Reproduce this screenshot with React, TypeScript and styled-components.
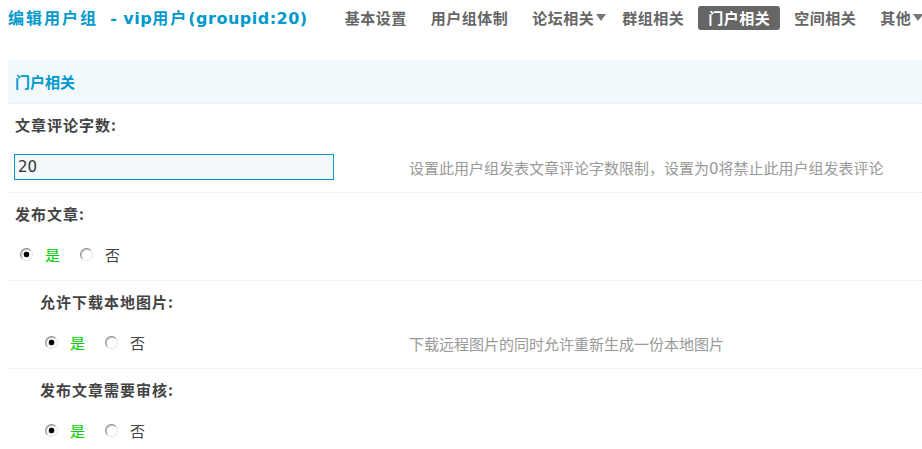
import styled, { createGlobalStyle } from "styled-components";

const GlobalStyle = createGlobalStyle`
  html, body {
    margin: 0;
    padding: 0;
    background: #fff;
  }
  body {
    font-family: "DejaVu Sans", "Noto Sans CJK SC", sans-serif;
    font-size: 15px;
    color: #333;
  }
`;

const navItems = [
  { name: "基本设置" },
  { name: "用户组体制" },
  { name: "论坛相关", drop: true },
  { name: "群组相关" },
  { name: "门户相关", active: true },
  { name: "空间相关" },
  { name: "其他", drop: true },
];

export default function App() {
  return (
    <Page>
      <GlobalStyle />
      <TopBar>
        <Title>
          <Cjk>编辑用户组</Cjk>
          {"  - vip"}
          <Cjk>用户</Cjk>
          (groupid:20)
        </Title>
        <Nav>
          {navItems.map((item) => (
            <NavItem key={item.name} active={!!item.active} drop={!!item.drop}>
              {item.name}
              {item.drop && (
                <Arrow width="10" height="9" viewBox="0 0 10 9">
                  <path d="M0 1 L10 1 L5 8 Z" fill="#777" />
                </Arrow>
              )}
            </NavItem>
          ))}
        </Nav>
      </TopBar>

      <SectionHead>门户相关</SectionHead>

      <Setting>
        <Label indent={7}>文章评论字数:</Label>
        <ValueRow>
          <ValueCell indent={6} tall>
            <TextInput type="text" defaultValue="20" />
          </ValueCell>
          <Tip>设置此用户组发表文章评论字数限制，设置为0将禁止此用户组发表评论</Tip>
        </ValueRow>
      </Setting>

      <Setting>
        <Label indent={7}>发布文章:</Label>
        <ValueRow>
          <ValueCell indent={12}>
            <RadioGroup />
          </ValueCell>
          <Tip />
        </ValueRow>
      </Setting>

      <Setting>
        <Label indent={32}>允许下载本地图片:</Label>
        <ValueRow>
          <ValueCell indent={37}>
            <RadioGroup />
          </ValueCell>
          <Tip>下载远程图片的同时允许重新生成一份本地图片</Tip>
        </ValueRow>
      </Setting>

      <Setting>
        <Label indent={32}>发布文章需要审核:</Label>
        <ValueRow>
          <ValueCell indent={37}>
            <RadioGroup />
          </ValueCell>
          <Tip />
        </ValueRow>
      </Setting>
    </Page>
  );
}

function RadioGroup() {
  return (
    <Radios>
      <RadioLabel>
        <RadioDot checked />
        <Yes>是</Yes>
      </RadioLabel>
      <RadioLabel>
        <RadioDot />
        <No>否</No>
      </RadioLabel>
    </Radios>
  );
}

const Page = styled.div`
  padding-left: 8px;
  width: 914px;
  overflow: hidden;
`;

const TopBar = styled.div`
  display: flex;
  align-items: center;
  height: 35px;
  margin-bottom: 25px;
  white-space: nowrap;
`;

const Title = styled.h3`
  margin: 0;
  font-size: 16px;
  font-weight: bold;
  color: #0099cc;
  white-space: pre;
  line-height: 35px;
  letter-spacing: 0.5px;
`;

const Cjk = styled.span`
  font-family: "Noto Sans CJK SC", sans-serif;
  font-size: 16px;
  letter-spacing: 2px;
`;

const Nav = styled.ul`
  display: flex;
  align-items: center;
  gap: 4px;
  margin: 0 0 0 27px;
  padding: 0;
  list-style: none;
`;

const NavItem = styled.li<{ active: boolean; drop: boolean }>`
  display: flex;
  align-items: center;
  height: 24px;
  padding: ${(p) => (p.drop ? "0 2px 0 10px" : "0 10px")};
  border-radius: 3px;
  background: ${(p) => (p.active ? "#666" : "transparent")};
  color: ${(p) => (p.active ? "#fff" : "#666")};
  font-family: "Noto Sans CJK SC", sans-serif;
  font-size: 15px;
  font-weight: bold;
  letter-spacing: 0.5px;
`;

const Arrow = styled.svg`
  margin-left: 2px;
`;

const SectionHead = styled.div`
  height: 43px;
  line-height: 43px;
  padding-left: 7px;
  background: #f2f9fd;
  border-bottom: 1px dotted #deeffb;
  color: #0099cc;
  font-family: "Noto Sans CJK SC", sans-serif;
  font-size: 15px;
  font-weight: bold;
`;

const Setting = styled.div`
  border-bottom: 1px dotted #deeffb;
`;

const Label = styled.div<{ indent: number }>`
  height: 42px;
  line-height: 42px;
  padding-left: ${(p) => p.indent}px;
  font-family: "Noto Sans CJK SC", sans-serif;
  font-size: 15px;
  font-weight: bold;
  letter-spacing: 1px;
  color: #444;
`;

const ValueRow = styled.div`
  display: grid;
  grid-template-columns: 401px 1fr;
  align-items: center;
`;

const ValueCell = styled.div<{ indent: number; tall?: boolean }>`
  padding: ${(p) => (p.tall ? "8px 0 12px" : "12px 0 19px")};
  padding-left: ${(p) => p.indent}px;
  display: flex;
  align-items: center;
`;

const TextInput = styled.input`
  box-sizing: border-box;
  width: 320px;
  height: 26px;
  margin: 0;
  padding: 0 3px;
  border: 1px solid #0099cc;
  background: #f5f9fe;
  color: #333;
  font-family: "DejaVu Sans", sans-serif;
  font-size: 15px;
  outline: none;
`;

const Tip = styled.div`
  color: #999;
  font-size: 15px;
  white-space: nowrap;
  margin-top: -4px;
`;

const Radios = styled.div`
  display: flex;
  align-items: center;
  gap: 20px;
`;

const RadioLabel = styled.label`
  display: flex;
  align-items: center;
  gap: 12px;
  height: 14px;
  font-family: "Noto Sans CJK SC", sans-serif;
  font-size: 15px;
`;

const RadioDot = styled.span<{ checked?: boolean }>`
  box-sizing: border-box;
  width: 13px;
  height: 13px;
  border-radius: 50%;
  border: 1px solid;
  border-color: #8a8a8a #e2e2e2 #e2e2e2 #8a8a8a;
  background: ${(p) =>
    p.checked
      ? "radial-gradient(circle, #000 0 2.6px, #fff 3.2px)"
      : "#fff"};
  box-shadow: inset 1px 1px 0 #c8c8c8;
`;

const Yes = styled.span`
  color: #00cc00;
`;

const No = styled.span`
  color: #444;
`;
